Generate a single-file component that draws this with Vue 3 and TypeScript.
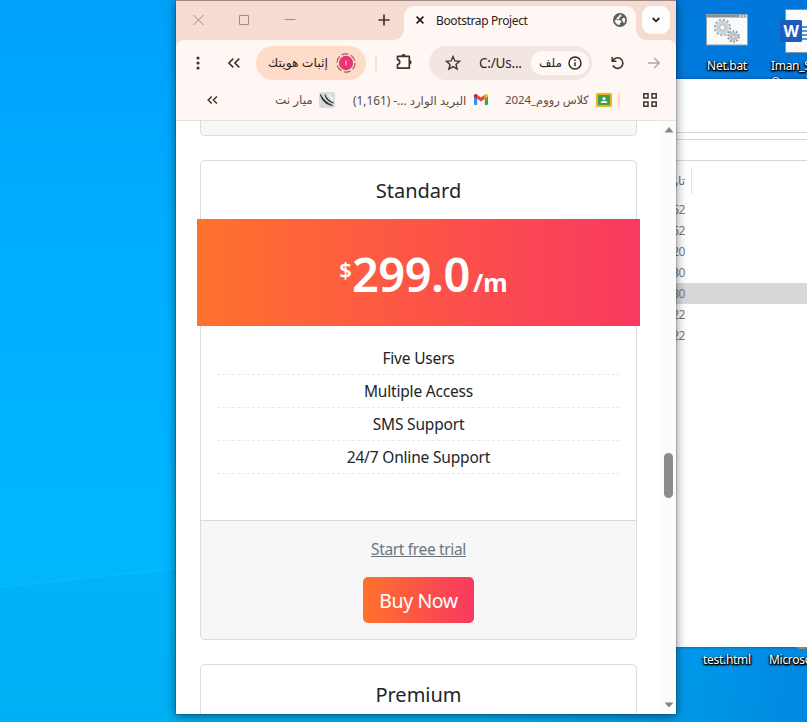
<script setup lang="ts">
interface Plan {
  name: string
  price: string
  features: string[]
}

const plans: Plan[] = [
  {
    name: 'Standard',
    price: '299.0',
    features: ['Five Users', 'Multiple Access', 'SMS Support', '24/7 Online Support'],
  },
]

const fileRows = [
  { time: '10:52', selected: false },
  { time: '10:52', selected: false },
  { time: '11:20', selected: false },
  { time: '11:30', selected: false },
  { time: '11:30', selected: true },
  { time: '12:22', selected: false },
  { time: '12:22', selected: false },
]
</script>

<template>
  <div class="desktop">
    <svg class="wallpaper-ray" viewBox="0 0 200 140" aria-hidden="true">
      <path d="M0 5 L200 -16 V140 H0Z" fill="#00a9ee" opacity=".2" />
      <path d="M0 5 L200 -16" stroke="#35c3ff" stroke-width="2" opacity=".22" />
    </svg>

    <div class="shortcut shortcut-bat">
      <svg width="42" height="32" viewBox="0 0 42 32">
        <rect x=".5" y=".5" width="41" height="30.5" fill="#fafafa" stroke="#93a0aa" />
        <rect x="1" y="1" width="40" height="2.5" fill="#8b8f92" />
        <path d="M33 2h2m1 0h2m1 0h2" stroke="#e8e8e8" stroke-width="1.4" />
        <circle cx="16.500" cy="13.500" r="7.600" fill="none" stroke="#a3adb4" stroke-width="2.200" stroke-dasharray="2.200 1.780" />
        <circle cx="16.500" cy="13.500" r="5" fill="#d7dde1" stroke="#ccd3d8" stroke-width="3.400" />
        <circle cx="16.500" cy="13.500" r="2.800" fill="#fafafa" stroke="#9aa5ac" stroke-width=".8" />
        <circle cx="27.500" cy="22.500" r="5.300" fill="none" stroke="#8c98a1" stroke-width="2" stroke-dasharray="1.800 1.530" />
        <circle cx="27.500" cy="22.500" r="3.300" fill="#fafafa" stroke="#bdc6cc" stroke-width="2.500" />
        <circle cx="27.500" cy="22.500" r="1.600" fill="#fafafa" stroke="#84909a" stroke-width=".8" />
      </svg>
      <span>Net.bat</span>
    </div>
    <div class="shortcut shortcut-doc">
      <svg width="52" height="46" viewBox="0 0 52 46">
        <rect x="5.500" y=".5" width="46" height="43" fill="#fcfcfc" stroke="#8796a3" />
        <path d="M22 18h14M22 22h14M22 26h14M22 30h14" stroke="#2b72c4" stroke-width="1.3" />
        <rect x="0" y="11" width="22" height="22" rx="1.500" fill="#1b5cbe" />
        <text x="11" y="27.500" text-anchor="middle" class="doc-letter">W</text>
      </svg>
      <span>Iman_S...</span>
      <span>Organi...</span>
    </div>
    <div class="shortcut shortcut-html"><span>test.html</span></div>
    <div class="shortcut shortcut-ms"><span>Microsoft</span></div>
    <div class="orange-icon"></div>

    <section class="explorer">
      <div class="ribbon"></div>
      <div class="ribbon-gap"></div>
      <div class="address"></div>
      <div class="columns"><span class="column-name" dir="rtl">تار</span></div>
      <div
        v-for="(row, index) in fileRows"
        :key="index"
        class="file-row"
        :class="{ selected: row.selected }"
      >
        <span>{{ row.time }}</span>
      </div>
    </section>

    <main class="browser">
      <header class="titlebar">
        <svg class="win-icons" width="103" height="12" viewBox="0 0 103 12" fill="none" stroke="#a58c82">
          <path d="M.5 1 10.500 11M10.500 1 .5 11M46.500 1.500h9v9h-9zM92 5.500h10.500" />
        </svg>
        <svg class="new-tab" width="12" height="12" viewBox="0 0 12 12" stroke="#45332c" stroke-width="1.700">
          <path d="M6 .5v11M.5 6h11" />
        </svg>
        <div class="tab">
          <svg class="tab-close" width="8" height="8" viewBox="0 0 8 8" stroke="#241a17" stroke-width="1.700">
            <path d="M.6.6 7.400 7.400M7.400.6.6 7.400" />
          </svg>
          <span class="tab-title">Bootstrap Project</span>
          <svg class="globe" width="14" height="14" viewBox="0 0 14 14">
            <circle cx="7" cy="7" r="7" fill="#5b6064" />
            <path d="M6.800 1.600C8 1.700 8.900 2.300 8.400 3.300 8 4.200 6.500 4 6.500 5.100c0 .9-.7 1.300-1.500 1.200-.8 0-.9.700-.4 1H7c1.100.1 1.500.8 1.400 1.600-.1.700-.9.800-1.500.9v2.300A5.300 5.300 0 0 1 1.700 6.900c1 .6 1.900.6 1.900-.3C3.500 5 3.800 4 4.900 3.900c.9-.1 1.100-1.100 1.900-2.300Z" fill="#fff7f3" />
            <path d="M9.400 5.500c.8-.6 1.800-.5 2.600-.2.500 1.800.1 3.700-1 4.900-.7-.3-.6-1.200-1.100-1.900-.6-.8-1.400-1.700-.5-2.800Z" fill="#fff7f3" />
          </svg>
        </div>
        <div class="tab-search">
          <svg width="8" height="6" viewBox="0 0 8 6" fill="none" stroke="#241a17" stroke-width="1.800"><path d="m.7 1 3.300 3.300L7.300 1" /></svg>
        </div>
      </header>

      <div class="toolbar">
        <svg class="menu" width="4" height="14" viewBox="0 0 4 14" fill="#45332c">
          <circle cx="2" cy="2" r="1.600" /><circle cx="2" cy="7" r="1.600" /><circle cx="2" cy="12" r="1.600" />
        </svg>
        <svg class="chevrons" width="12" height="10" viewBox="0 0 12 10" fill="none" stroke="#45332c" stroke-width="1.600">
          <path d="M5.300.6.9 5l4.400 4.400M11.300.6 6.900 5l4.400 4.400" />
        </svg>
        <div class="identity">
          <span dir="rtl">إثبات هويتك</span>
          <svg width="20" height="20" viewBox="0 0 20 20">
            <circle cx="10" cy="10" r="9.100" fill="none" stroke="#8a6256" stroke-width="1.100" stroke-dasharray="7 2.530" />
            <circle cx="10" cy="10" r="7.200" fill="#ee3372" />
            <path d="M10 7.500v5" stroke="#ffb8cf" stroke-width="1.300" />
          </svg>
        </div>
        <i class="separator"></i>
        <svg class="puzzle" width="17" height="17" viewBox="0 0 17 17" fill="none" stroke="#45332c" stroke-width="1.700" stroke-linejoin="round">
          <path d="M1.500 3.300h11.800v11.900H1.500v-3.700c3-.3 3-4.600 0-4.900Z" />
          <path d="M5.300 3.300a2.200 2.200 0 0 1 4.400 0ZM13.400 7a2.200 2.200 0 0 1 0 4.400Z" fill="#45332c" stroke="none" />
        </svg>
        <div class="omnibox">
          <svg class="star" width="16" height="16" viewBox="0 0 16 16" fill="none" stroke="#45332c" stroke-width="1.400">
            <path d="m8 1.600 1.850 4.350 4.750.4-3.600 3.100 1.100 4.650L8 11.600l-4.100 2.500L5 9.450l-3.600-3.100 4.750-.4Z" />
          </svg>
          <span class="url">C:/Us...</span>
          <div class="scheme">
            <span dir="rtl">ملف</span>
            <svg width="14" height="14" viewBox="0 0 14 14" fill="none" stroke="#2c211d" stroke-width="1.400">
              <circle cx="7" cy="7" r="6" /><path d="M7 6.200v4M7 3.500v1.500" />
            </svg>
          </div>
        </div>
        <svg class="reload" width="14" height="14" viewBox="0 0 14 14" fill="none" stroke="#45332c" stroke-width="1.600">
          <path d="M1.200 1v4.200h4.200M1.700 5A5.300 5.300 0 1 1 1.800 9.300" />
        </svg>
        <svg class="forward" width="12" height="12" viewBox="0 0 12 12" fill="none" stroke="#b5a7a2" stroke-width="1.400">
          <path d="M0 6h11M6 .8 11.200 6 6 11.200" />
        </svg>
      </div>

      <nav class="bookmarks">
        <svg class="more" width="11" height="8" viewBox="0 0 11 8" fill="none" stroke="#45332c" stroke-width="1.500">
          <path d="M4.700.5 1.200 4l3.500 3.500M9.900.5 6.400 4l3.500 3.500" />
        </svg>
        <div class="bookmark miyar">
          <span dir="rtl">ميار نت</span>
          <svg width="16" height="16" viewBox="0 0 16 16" fill="none">
            <rect width="16" height="16" rx="2.500" fill="#d9d9d9" />
            <path d="M1.500 2.500C2.500 7.500 6 12.500 13.500 13.500 8 11 4 7.500 1.500 2.500Z" fill="#303030" stroke="#303030" stroke-width=".8" />
            <path d="M6 2.500c.5 4 3.500 7.500 8.500 8.500C10.500 9 7.500 6.500 6 2.500Z" fill="#303030" stroke="#303030" stroke-width=".7" />
            <path d="M10.500 2c.2 2.500 1.500 4.500 4 6" stroke="#f4f4f4" stroke-width="1.800" />
          </svg>
        </div>
        <div class="bookmark gmail">
          <span dir="rtl">البريد الوارد ...- (1,161)</span>
          <svg width="14" height="11" viewBox="0 0 14 11">
            <path d="M0 1.500 3.200 3.800V11H1a1 1 0 0 1-1-1Z" fill="#4285f4" />
            <path d="M14 1.500 10.800 3.800V11H13a1 1 0 0 0 1-1Z" fill="#34a853" />
            <path d="M3.200.7 7 3.600 10.800.7v4L7 7.600 3.200 4.700Z" fill="#ea4335" />
            <path d="M0 2.400V1.600C0 .1 1.600-.4 2.700.4l.5.3v4Z" fill="#c5221f" />
            <path d="M14 2.400V1.600c0-1.500-1.600-2-2.700-1.200l-.5.300v4Z" fill="#fbbc04" />
          </svg>
        </div>
        <div class="bookmark classroom">
          <span dir="rtl">كلاس رووم_2024</span>
          <svg width="16" height="14" viewBox="0 0 16 14">
            <rect width="16" height="14" rx="1.200" fill="#e9b61c" />
            <rect x="2" y="2" width="12" height="10" fill="#3f9c50" />
            <circle cx="8" cy="5.500" r="1.600" fill="#fff" /><path d="M4.500 10c0-3 7-3 7 0Z" fill="#e5f5e9" />
          </svg>
        </div>
        <i class="separator"></i>
        <svg class="apps" width="14" height="14" viewBox="0 0 14 14" fill="none" stroke="#45332c" stroke-width="1.500">
          <path d="M.8.8h4.200v4.200H.8zM9 .8h4.200v4.200H9zM.8 9h4.200v4.200H.8zM9 9h4.200v4.200H9z" />
        </svg>
      </nav>

      <div class="viewport">
        <div class="page">
          <article class="card card-previous"></article>
          <article v-for="plan in plans" :key="plan.name" class="card">
            <h5>{{ plan.name }}</h5>
            <div class="price">
              <span class="currency">$</span><span class="amount">{{ plan.price }}</span><span class="period">/m</span>
            </div>
            <ul>
              <li v-for="feature in plan.features" :key="feature">{{ feature }}</li>
            </ul>
            <footer>
              <a href="#">Start free trial</a>
              <button type="button">Buy Now</button>
            </footer>
          </article>
          <article class="card card-next"><h5>Premium</h5></article>
        </div>
        <div class="scrollbar">
          <svg width="10" height="6" viewBox="0 0 10 6" fill="#858585"><path d="M5 0 9.500 5.500H.5Z" /></svg>
          <i class="thumb"></i>
          <svg width="10" height="6" viewBox="0 0 10 6" fill="#858585"><path d="M5 5.500 9.500.5H.5Z" /></svg>
        </div>
      </div>
    </main>
  </div>
</template>

<style>
body {
  overflow: hidden;
}
</style>

<style scoped>
* {
  box-sizing: border-box;
}

svg {
  display: block;
  flex: none;
}

span {
  white-space: nowrap;
}

.desktop {
  position: relative;
  width: 807px;
  height: 722px;
  overflow: hidden;
  font-family: 'Noto Sans', 'DejaVu Sans', sans-serif;
  background:
    linear-gradient(90deg, transparent 60%, rgba(0, 108, 210, 0.6) 100%),
    linear-gradient(90deg, transparent 40%, rgba(0, 104, 208, 0.55) 84%) 0 0 / 807px 100px no-repeat,
    linear-gradient(180deg, #00a1fa 0, #00aeff 240px, #00b7ff 540px, #00b2f5 722px);
}

.wallpaper-ray {
  position: absolute;
  left: 0;
  top: 582px;
  width: 200px;
  height: 140px;
  overflow: visible;
}

.shortcut {
  position: absolute;
  display: flex;
  flex-direction: column;
  align-items: center;
  color: #fff;
  font-size: 12px;
  line-height: 16px;
  letter-spacing: -0.3px;
  text-shadow: 1px 1px 2px #000, 0 1px 2px #000, -1px 1px 2px #000, 1px 1px 1px #000;
}

.shortcut-bat {
  left: 706px;
  top: 14px;
  gap: 12px;
}

.shortcut-doc {
  left: 771px;
  top: 9px;
  align-items: flex-start;
}

.shortcut-doc svg {
  margin: 0 0 3px 9px;
}

.doc-letter {
  fill: #fff;
  font: bold 16px 'Noto Sans', sans-serif;
  text-shadow: none;
}

.shortcut-html {
  left: 703px;
  top: 652px;
}

.shortcut-ms {
  left: 769px;
  top: 652px;
}

.orange-icon {
  position: absolute;
  left: 793px;
  top: 636px;
  width: 18px;
  height: 13px;
  border-radius: 50%;
  background: #dc9440;
}

.explorer {
  position: absolute;
  left: 640px;
  top: 79px;
  width: 180px;
  height: 568px;
  background: #fff;
  box-shadow: 0 0 3px rgba(0, 30, 80, 0.5);
  font-size: 12px;
  color: #7a7a7a;
}

.ribbon {
  height: 54px;
  border-bottom: 1px solid #d6d6d6;
}

.ribbon-gap {
  height: 7px;
  border-bottom: 1px solid #d6d6d6;
}

.address {
  height: 21px;
  border-bottom: 1px solid #d6d6d6;
}

.columns {
  display: flex;
  justify-content: flex-end;
  width: 52px;
  height: 26px;
  margin: 7px 0 5px;
  padding-right: 6px;
  border-right: 1px solid #e2e2e2;
  color: #5f6c85;
  line-height: 26px;
}

.file-row {
  display: flex;
  height: 21px;
}

.file-row span {
  width: 45px;
  text-align: right;
  line-height: 22px;
  letter-spacing: -0.5px;
}

.file-row.selected {
  background: #d8d8d8;
}

.browser {
  position: absolute;
  left: 176px;
  top: 0;
  display: flex;
  flex-direction: column;
  width: 500px;
  height: 714px;
  background: #f6dcd0;
  box-shadow: 0 0 1px rgba(0, 0, 0, 0.9), 0 2px 10px rgba(0, 0, 0, 0.5);
  color: #2c211d;
}

.titlebar {
  display: flex;
  align-items: center;
  height: 40px;
  border-top: 1px solid #9b8a85;
}

.win-icons {
  margin: -2px 0 0 17px;
}

.new-tab {
  margin: -1px 0 0 82px;
}

.tab {
  position: relative;
  display: flex;
  align-items: center;
  align-self: flex-end;
  width: 232px;
  height: 34px;
  margin-left: 14px;
  padding: 0 9px 6px 12px;
  border-radius: 10px 10px 0 0;
  background: #fff7f3;
}

.tab::before,
.tab::after {
  content: '';
  position: absolute;
  bottom: 0;
  width: 10px;
  height: 10px;
}

.tab::before {
  right: 100%;
  background: radial-gradient(circle at 0 0, transparent 9.5px, #fff7f3 10px);
}

.tab::after {
  left: 100%;
  background: radial-gradient(circle at 100% 0, transparent 9.5px, #fff7f3 10px);
}

.tab-title {
  margin-left: 12px;
  font-size: 12px;
  letter-spacing: -0.37px;
}

.globe {
  margin-left: auto;
}

.tab-search {
  display: grid;
  place-items: center;
  width: 28px;
  height: 28px;
  margin: -1px 0 0 6px;
  border-radius: 9px;
  background: #fffdfc;
}

.toolbar {
  display: flex;
  align-items: center;
  height: 45px;
  border-radius: 8px 8px 0 0;
  background: #fff7f3;
}

.menu {
  margin-left: 20px;
}

.chevrons {
  margin-left: 28px;
}

.identity {
  display: flex;
  align-items: center;
  justify-content: space-between;
  width: 110px;
  height: 34px;
  margin-left: 16px;
  padding: 0 10px 0 12px;
  border-radius: 17px;
  background: #ffdbc9;
  font-size: 12.4px;
}

.separator {
  flex: none;
  width: 2px;
  height: 16px;
  margin-left: 9px;
  background: #ffdbc9;
}

.puzzle {
  margin: -2px 0 0 19px;
}

.omnibox {
  display: flex;
  align-items: center;
  width: 163px;
  height: 34px;
  margin-left: 16px;
  padding: 0 3px 0 16px;
  border-radius: 17px;
  background: #f2e6e3;
}

.url {
  margin-left: 18px;
  font-size: 13.5px;
  letter-spacing: -0.2px;
}

.scheme {
  display: flex;
  align-items: center;
  justify-content: space-between;
  width: 58px;
  height: 24px;
  margin-left: auto;
  padding: 0 7px 0 8px;
  border-radius: 12px;
  background: #fff9f6;
  font-size: 12px;
}

.reload {
  margin-left: 19px;
}

.forward {
  margin-left: 23px;
}

.bookmarks {
  display: flex;
  align-items: center;
  height: 36px;
  padding-bottom: 6px;
  border-bottom: 1px solid #efddd7;
  background: #fff7f3;
  font-size: 12px;
  color: #5c4c46;
}

.more {
  margin-left: 31px;
}

.bookmark {
  display: flex;
  align-items: center;
  justify-content: space-between;
}

.miyar {
  width: 60px;
  margin-left: 57px;
}

.gmail {
  width: 135px;
  margin-left: 18px;
  font-size: 11.8px;
}

.classroom {
  width: 107px;
  margin-left: 17px;
  font-size: 11.4px;
}

.bookmarks .separator {
  margin-left: 6px;
}

.apps {
  margin-left: 23px;
}

.viewport {
  display: flex;
  flex: 1;
  min-height: 0;
  background: #fff;
}

.page {
  display: flex;
  flex: 1;
  flex-direction: column;
  gap: 24px;
  padding: 0 24px;
  overflow: hidden;
  color: #212529;
}

.card {
  display: flex;
  flex: none;
  flex-direction: column;
  width: 437px;
  height: 480px;
  border: 1px solid #dcdcdc;
  border-radius: 5px;
  background: #fff;
}

.card-previous {
  height: 15px;
  border-top: 0;
  border-radius: 0 0 5px 5px;
  background: #f7f7f7;
}

.card h5 {
  margin: 18px 0 16px;
  font-size: 20px;
  font-weight: 400;
  line-height: 24px;
  text-align: center;
}

.price {
  display: flex;
  align-items: baseline;
  justify-content: center;
  height: 107px;
  margin: 0 -4px;
  padding: 26px 0 0 10px;
  background: linear-gradient(90deg, #ff722d, #f93860);
  color: #fff;
  line-height: 58px;
  font-weight: 600;
}

.currency {
  align-self: flex-start;
  font-size: 22px;
  line-height: 48px;
}

.amount {
  font-size: 47px;
  letter-spacing: -0.5px;
}

.period {
  margin-left: 3px;
  font-size: 25px;
  font-weight: 700;
}

.card ul {
  margin: 16px 16px 0;
  padding: 0;
  list-style: none;
}

.card li {
  height: 33px;
  border-bottom: 1px dashed #e9e9e9;
  font-size: 15.5px;
  line-height: 33px;
  letter-spacing: -0.18px;
  text-align: center;
}

.card footer {
  display: flex;
  flex-direction: column;
  align-items: center;
  height: 119px;
  margin-top: auto;
  padding-top: 16px;
  border-top: 1px solid #d8d8d8;
  border-radius: 0 0 4px 4px;
  background: #f7f7f7;
}

.card a {
  color: #6c757d;
  font-size: 15.5px;
  line-height: 24px;
  letter-spacing: -0.35px;
}

.card button {
  width: 111px;
  height: 46px;
  margin-top: 16px;
  padding: 0;
  border: 0;
  border-radius: 5px;
  background: linear-gradient(90deg, #ff722d, #f93860);
  color: #fff;
  font: 400 19.5px 'Noto Sans', sans-serif;
  letter-spacing: -0.4px;
  white-space: nowrap;
}

.scrollbar {
  display: flex;
  flex-direction: column;
  align-items: center;
  width: 15px;
  padding: 6px 0 6px;
  background: #fcfcfc;
}

.thumb {
  width: 9px;
  height: 45px;
  margin: 320px 0 auto;
  border-radius: 5px;
  background: #8b8b8b;
}
</style>
